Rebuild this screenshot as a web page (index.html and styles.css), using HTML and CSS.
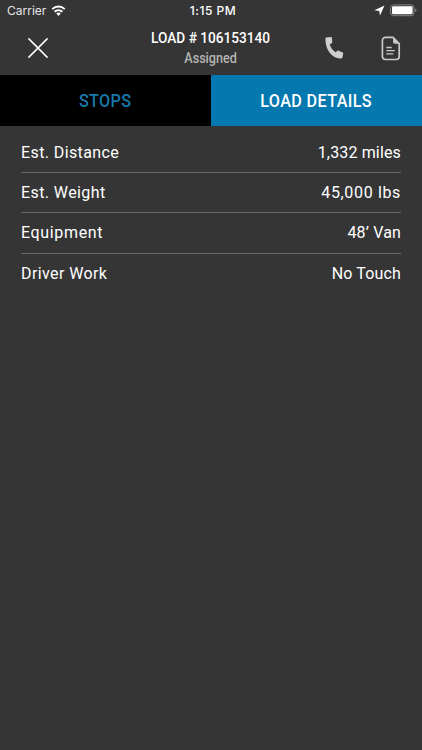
FILE: index.html
```
<!DOCTYPE html>
<html lang="en">
<head>
    <meta charset="UTF-8">
    <meta name="viewport" content="width=device-width, initial-scale=1.0">
    <title>Load Details</title>
    <link rel="stylesheet" href="styles.css">
</head>
<body>
    <div class="status-bar">
        <div class="carrier">
            <span>Carrier</span>
            <svg width="15" height="11" viewBox="0 0 14 11" fill="none" stroke="#fff" stroke-width="2">
                <path d="M.8 4.1a9 9 0 0 1 12.4 0M3.1 6.8a5.7 5.7 0 0 1 7.8 0"/>
                <path d="M4.8 8.6a3.2 3.2 0 0 1 4.4 0L7 10.9z" fill="#fff" stroke="none"/>
            </svg>
        </div>
        <div class="clock">1:15 PM</div>
        <div class="indicators">
            <svg width="11" height="11" viewBox="0 0 11 11" fill="#fff"><path d="M10.5.4 6 10.5 5.2 6 .4 5.2z"/></svg>
            <svg width="27" height="13" viewBox="0 0 27 13">
                <rect x=".6" y=".9" width="23.4" height="10.8" rx="2.8" fill="none" stroke="#858585"/>
                <rect x="2" y="2.3" width="20.6" height="8" rx="1.2" fill="#fff"/>
                <path d="M25.1 4.5q1.3.6 1.3 1.8t-1.3 1.8z" fill="#858585"/>
            </svg>
        </div>
    </div>

    <header class="header">
        <svg class="close" width="20" height="20" viewBox="0 0 20 20" stroke="#fff" stroke-width="1.5" stroke-linecap="round"><path d="m.9.9 18.2 18.2M19.1.9.9 19.1"/></svg>
        <div class="titles">
            <div class="title">LOAD # 106153140</div>
            <div class="subtitle">Assigned</div>
        </div>
        <div class="actions">
            <svg width="19" height="24" viewBox="0 0 19 24" fill="#cfcfcf"><path d="M1.2 1.6 6 1q.8 0 .9.8l.4 4.5q0 .7-.6 1l-2 1.2c1 3.2 3 5.900 6 7.800l1.800-1.500q.6-.4 1.200-.1l4 1.900q.7.4.5 1.100l-.9 4.100q-.2.8-1 .8C7.500 22.400.2 14.500.4 2.400q0-.7.8-.8z"/></svg>
            <svg width="20" height="25" viewBox="0 0 20 25" fill="none" stroke="#c9c9c9" stroke-width="1.7">
                <path d="M4.3 1.4H12l6.2 6.3v12.9a2.9 2.9 0 0 1-2.9 2.9h-11a2.9 2.9 0 0 1-2.9-2.9V4.3a2.9 2.9 0 0 1 2.9-2.9z"/>
                <path d="M12 1.4 18.2 7.7H14a2 2 0 0 1-2-2z" fill="#c9c9c9" stroke="none"/>
                <path d="M5.3 11.5h5.4M5.3 14.7h8.5M5.3 17.9h7" stroke-width="1.3"/>
            </svg>
        </div>
    </header>

    <nav class="tabs">
        <div class="tab"><span>STOPS</span></div>
        <div class="tab active"><span>LOAD DETAILS</span></div>
    </nav>

    <main class="details">
        <div class="row"><span>Est. Distance</span><span class="value">1,332 miles</span></div>
        <div class="row"><span>Est. Weight</span><span class="value wide">45,000 lbs</span></div>
        <div class="row"><span class="wide">Equipment</span><span class="value">48’ Van</span></div>
        <div class="row"><span>Driver Work</span><span class="value">No Touch</span></div>
    </main>
</body>
</html>
```
FILE: styles.css
```
* {
    box-sizing: border-box;
}
body {
    margin: 0;
    height: 750px;
    overflow: hidden;
    background: #353535;
    color: #fff;
    font-family: Roboto, "Liberation Sans", sans-serif;
}
svg {
    display: block;
    flex: none;
}
.status-bar {
    display: grid;
    grid-template-columns: 1fr auto 1fr;
    align-items: center;
    height: 21px;
    padding: 0 5px 0 7px;
    font-family: Inter, sans-serif;
    font-size: 12px;
}
.carrier {
    display: flex;
    align-items: center;
    gap: 5px;
    color: #e5e5e5;
}
.clock {
    padding-left: 2px;
    font-weight: 500;
    letter-spacing: 0.5px;
}
.indicators {
    display: flex;
    justify-content: flex-end;
    align-items: center;
    gap: 5px;
}
.header {
    display: grid;
    grid-template-columns: 1fr auto 1fr;
    height: 54px;
    padding: 0 21px;
}
.close {
    margin: 17px 0 0 7px;
}
.titles {
    text-align: center;
    white-space: nowrap;
}
.title {
    margin-top: 7px;
    font-size: 15.5px;
    font-weight: 500;
    line-height: 20px;
    transform: scaleX(0.88);
}
.subtitle {
    font-size: 14px;
    font-weight: 500;
    line-height: 20px;
    color: #b4b4b4;
    transform: scaleX(0.9);
}
.actions {
    display: flex;
    justify-content: flex-end;
    gap: 37px;
    padding-top: 15px;
}
.tabs {
    display: grid;
    grid-template-columns: 1fr 1fr;
    height: 51px;
}
.tab {
    display: flex;
    align-items: center;
    justify-content: center;
    background: #000;
    color: #1878ab;
    font-size: 18px;
    font-weight: 500;
}
.tab.active {
    background: #0578b0;
    color: #fff;
}
.tab span {
    letter-spacing: 0.4px;
    transform: scaleX(0.9);
}
.details {
    padding: 6px 21px 0;
}
.row {
    display: flex;
    justify-content: space-between;
    align-items: center;
    height: 40.3px;
    padding-bottom: 1px;
    border-bottom: 1px solid #686868;
    font-size: 16px;
    letter-spacing: 0.4px;
}
.row:first-child {
    height: 41px;
    padding-bottom: 0;
}
.row:last-child {
    border-bottom: none;
}
.value {
    letter-spacing: 0.15px;
}
.wide {
    letter-spacing: 0.65px;
}
```
